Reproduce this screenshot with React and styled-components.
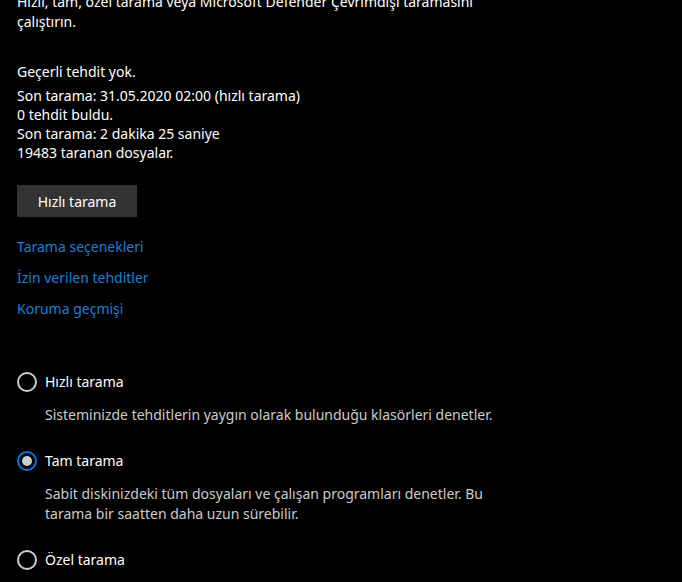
import React, { useState } from "react";
import styled, { createGlobalStyle } from "styled-components";

const GlobalStyle = createGlobalStyle`
  html, body {
    margin: 0;
    padding: 0;
    background: #000000;
  }
  body {
    font-family: "Noto Sans", "Open Sans", sans-serif;
    font-size: 14px;
    color: #ffffff;
    overflow: hidden;
  }
`;

const Page = styled.main`
  width: 682px;
  height: 582px;
  padding: 0 17px;
  box-sizing: border-box;
  overflow: hidden;
  display: flex;
  flex-direction: column;
  align-items: flex-start;
`;

const Intro = styled.p`
  margin: -8px 0 0;
  max-width: 500px;
  line-height: 20px;
`;

const Status = styled.div`
  margin-top: 30px;
  display: flex;
  flex-direction: column;
`;

const StatusHead = styled.div`
  line-height: 20px;
  margin-bottom: 4px;
`;

const StatusLine = styled.div`
  line-height: 19px;
`;

const ScanButton = styled.button`
  margin-top: 23px;
  width: 120px;
  height: 32px;
  border: none;
  background: #333333;
  color: #ffffff;
  font-family: inherit;
  font-size: 14px;
  padding: 0;
  cursor: pointer;
`;

const Links = styled.nav`
  margin-top: 20px;
  display: flex;
  flex-direction: column;
  align-items: flex-start;
  gap: 11px;
`;

const Link = styled.a`
  color: #1a80d6;
  line-height: 20px;
  text-decoration: none;
  cursor: pointer;
`;

const Options = styled.div`
  margin-top: 53px;
  display: flex;
  flex-direction: column;
`;

const Option = styled.div`
  display: flex;
  flex-direction: column;
  margin-top: ${(p) => (p.$first ? 0 : 26)}px;
`;

const RadioRow = styled.label`
  display: flex;
  align-items: center;
  gap: 8px;
  height: 20px;
  line-height: 20px;
  cursor: pointer;
`;

const Circle = styled.span`
  width: 20px;
  height: 20px;
  box-sizing: border-box;
  border-radius: 50%;
  border: 2px solid ${(p) => (p.$checked ? "#0078d7" : "#cccccc")};
  display: flex;
  align-items: center;
  justify-content: center;

  &::after {
    content: "";
    width: 10px;
    height: 10px;
    border-radius: 50%;
    background: #cccccc;
    display: ${(p) => (p.$checked ? "block" : "none")};
  }
`;

const Description = styled.p`
  margin: 13px 0 0 28px;
  max-width: 455px;
  line-height: 20px;
  color: #cccccc;
`;

const options = [
  {
    id: "quick",
    label: "Hızlı tarama",
    desc: "Sisteminizde tehditlerin yaygın olarak bulunduğu klasörleri denetler.",
  },
  {
    id: "full",
    label: "Tam tarama",
    desc: "Sabit diskinizdeki tüm dosyaları ve çalışan programları denetler. Bu tarama bir saatten daha uzun sürebilir.",
  },
  { id: "custom", label: "Özel tarama" },
];

export default function App() {
  const [selected, setSelected] = useState("full");

  return (
    <>
      <GlobalStyle />
      <Page>
        <Intro>
          Hızlı, tam, özel tarama veya Microsoft Defender Çevrimdışı taramasını
          çalıştırın.
        </Intro>

        <Status>
          <StatusHead>Geçerli tehdit yok.</StatusHead>
          <StatusLine>Son tarama: 31.05.2020 02:00 (hızlı tarama)</StatusLine>
          <StatusLine>0 tehdit buldu.</StatusLine>
          <StatusLine>Son tarama: 2 dakika 25 saniye</StatusLine>
          <StatusLine>19483 taranan dosyalar.</StatusLine>
        </Status>

        <ScanButton>Hızlı tarama</ScanButton>

        <Links>
          <Link>Tarama seçenekleri</Link>
          <Link>İzin verilen tehditler</Link>
          <Link>Koruma geçmişi</Link>
        </Links>

        <Options>
          {options.map((o, i) => (
            <Option key={o.id} $first={i === 0}>
              <RadioRow onClick={() => setSelected(o.id)}>
                <Circle $checked={selected === o.id} />
                {o.label}
              </RadioRow>
              {o.desc && <Description>{o.desc}</Description>}
            </Option>
          ))}
        </Options>
      </Page>
    </>
  );
}
